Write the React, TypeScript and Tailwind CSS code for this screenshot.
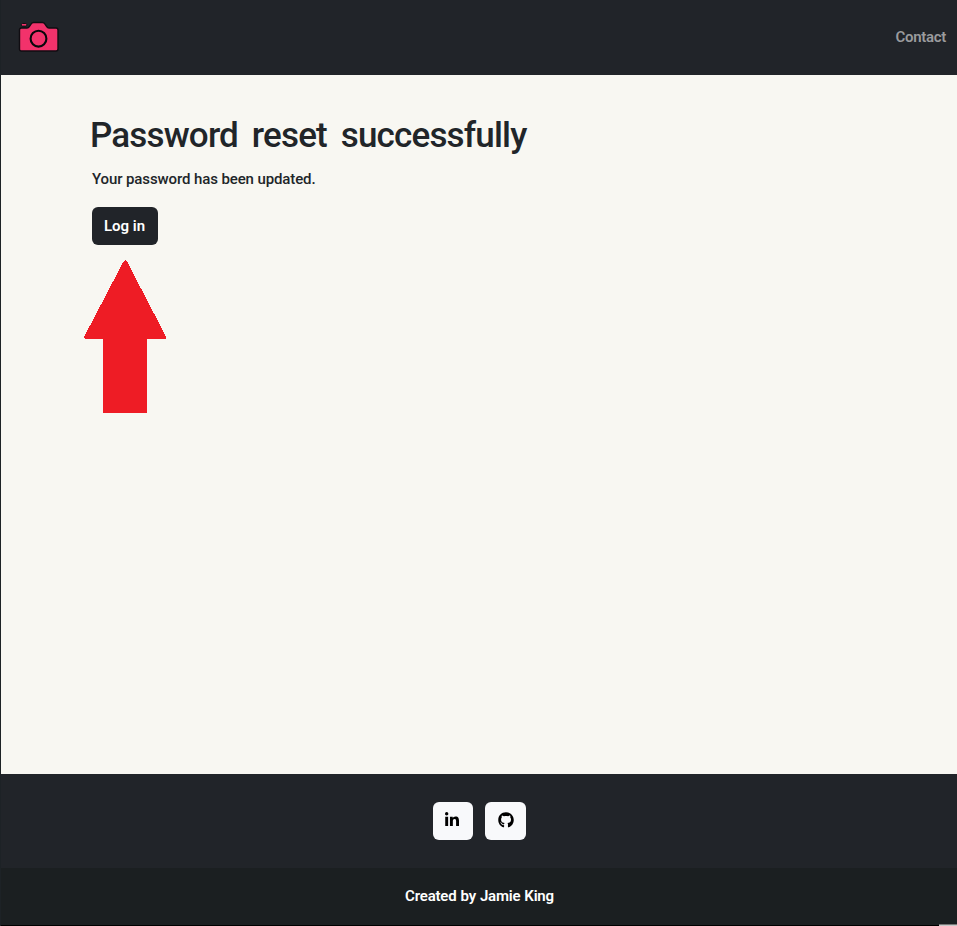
import React from "react";
import { FaGithub, FaLinkedinIn } from "react-icons/fa";

function CameraLogo() {
  return (
    <svg width="42" height="32" viewBox="0 0 42 32" aria-label="Camera">
      <path
        d="M4.500 7H10Q11.500 7 12.300 5.600L14.200 2.800Q15 1.500 16.500 1.500H25.500Q27 1.500 27.800 2.800L29.700 5.600Q30.500 7 32 7H39Q41 7 41 9V28Q41 30 39 30H4.500Q2.500 30 2.500 28V9Q2.500 7 4.500 7Z"
        fill="#f2326b"
        stroke="#100d12"
        strokeWidth="1.4"
      />
      <rect x="4.400" y="2.500" width="5.400" height="2.600" rx="1" fill="#f2326b" stroke="#100d12" strokeWidth="1" />
      <circle cx="21.500" cy="17.700" r="7.900" fill="none" stroke="#07070a" strokeWidth="2.100" />
    </svg>
  );
}

function Header() {
  return (
    <header className="flex h-[75px] shrink-0 items-center justify-between bg-[#212429] pr-[11px] pl-4">
      <a href="#" className="block pb-px">
        <CameraLogo />
      </a>
      <a href="#" className="pb-[2px] text-[15px] leading-6 font-semibold tracking-[-0.3px] text-[#9a9b9d]">
        Contact
      </a>
    </header>
  );
}

function UpArrow() {
  return (
    <svg className="mt-[15px] -ml-[8px]" width="83" height="154" viewBox="0 0 83 154" shapeRendering="crispEdges">
      <path
        d="M39.5 1.5Q41.300 -1 43 1.5L81.700 76Q82.500 79 80.500 79H63V151.500Q63 153 61.500 153H21Q19 153 19 151V79H2Q-0.500 79 0.500 76Z"
        fill="#ee1c25"
      />
    </svg>
  );
}

function Footer() {
  return (
    <footer className="shrink-0 border-b border-black">
      <div className="flex h-[94px] items-start justify-center gap-3 bg-[#212429] pt-7">
        <a href="#" aria-label="LinkedIn" className="flex h-[38px] w-10 items-center justify-center rounded-md bg-[#f8f9fb] pr-px pb-[2px] text-black">
          <FaLinkedinIn size={16} />
        </a>
        <a href="#" aria-label="GitHub" className="flex h-[38px] w-[41px] items-center justify-center rounded-md bg-[#f8f9fb] pb-[2px] pl-px text-black">
          <FaGithub size={16} />
        </a>
      </div>
      <div className="flex h-[57px] items-center justify-center bg-[#1b1f21] pl-px text-[15px] font-semibold tracking-[-0.2px] [word-spacing:0.5px] text-white">
        <span>Created by Jamie King</span>
      </div>
    </footer>
  );
}

export default function App() {
  return (
    <div className="relative flex h-[926px] flex-col border-l border-[#1d2226] bg-[#f8f7f2] font-['Roboto','Liberation_Sans',sans-serif] text-[#212529]">
      <Header />
      <main className="flex grow flex-col items-start pt-[39px] pl-[91px]">
        <h1 className="-ml-[2px] text-[35px] leading-[44px] font-medium tracking-[-0.83px] [word-spacing:6px]">
          Password reset successfully
        </h1>
        <p className="mt-[9px] text-[15px] leading-6 font-medium tracking-[-0.11px]">Your password has been updated.</p>
        <a href="#" className="mt-4 flex h-[38px] w-[66px] items-center justify-center rounded-md bg-[#212429] pr-px text-[15px] font-semibold text-white">
          Log in
        </a>
        <UpArrow />
      </main>
      <Footer />
      <div className="absolute right-0 bottom-0 h-[2px] w-[18px] border-t border-[#777] bg-[#c8c8c8]" />
    </div>
  );
}
